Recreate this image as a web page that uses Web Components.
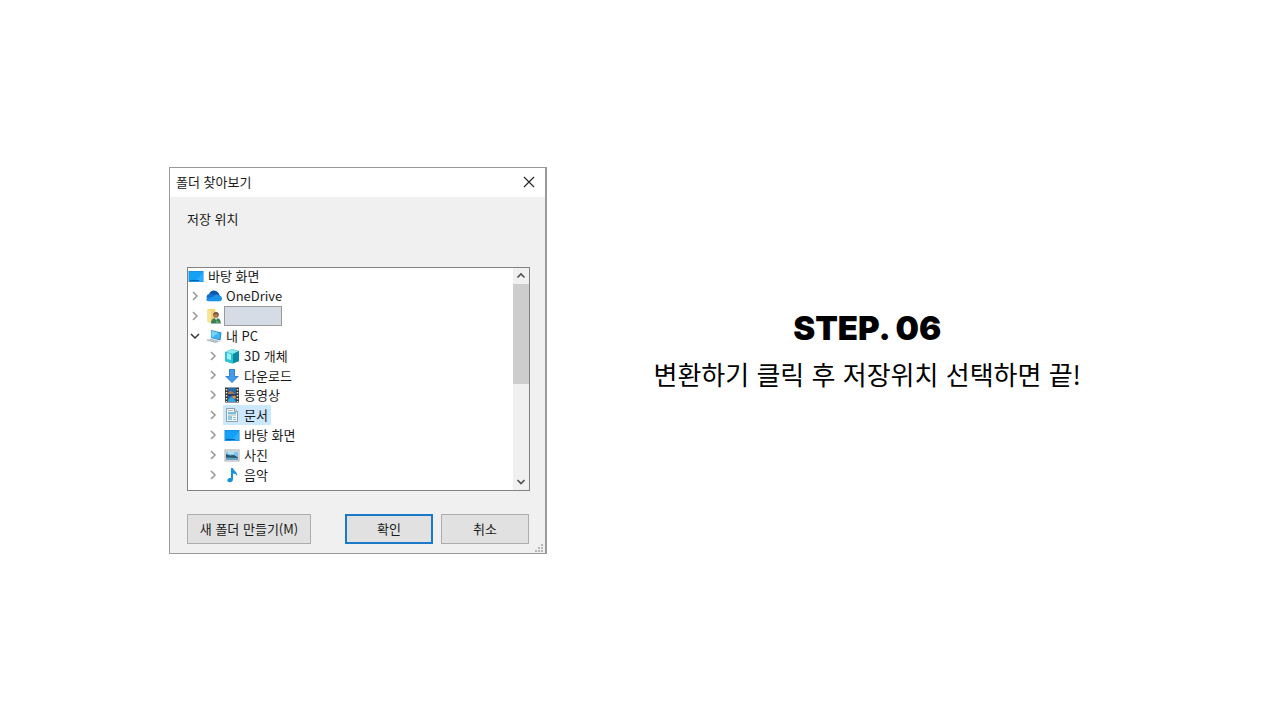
<!DOCTYPE html>
<html lang="ko">
<head>
<meta charset="utf-8">
<meta name="viewport" content="width=device-width, initial-scale=1">
<title>STEP. 06</title>
<style>
body { margin: 0; background: #fff; font-family: "Noto Sans CJK KR", sans-serif; }
</style>
</head>
<body>
<guide-slide>
  <folder-dialog slot="figure" heading="폴더 찾아보기" prompt="저장 위치"></folder-dialog>
  <step-caption slot="caption"><span slot="step">STEP. 06</span>변환하기 클릭 후 저장위치 선택하면 끝!</step-caption>
</guide-slide>
<script>
const define = (name, html, setup) => customElements.define(name, class extends HTMLElement {
  connectedCallback() {
    if (this.shadowRoot) return;
    const root = this.attachShadow({ mode: "open" });
    const template = document.createElement("template");
    template.innerHTML = html;
    root.append(template.content.cloneNode(true));
    if (setup) setup(this, root);
  }
});

const monitor = `<rect x=".5" y="3" width="15" height="11" fill="#1683d0"/><rect x="1" y="3.500" width="14" height="10" fill="#16a0f5"/><path d="M7 13.500 15 5v8.500z" fill="#2caeff"/><path d="M2 12.500h9" stroke="#0865ac"/>`;
const icons = {
  desktop: monitor,
  onedrive: `<path d="M3 6.500a5.200 5.200 0 0 1 9.500-1.500L14 8l-8 4z" fill="#0b55ae"/><path d="M3 6c2-.6 4 .1 5.500 1.500l3 4H2A3 3 0 0 1 3 6z" fill="#0f6fcb"/><path d="M7.500 8.500c1.500-2.300 4.500-2.500 5.700-.7 1.800 0 2.800 1.300 2.800 2.700 0 1.700-1 2.800-2.500 2.800H3C1.500 13.300.3 12.500 0 11z" fill="#1c91e8"/>`,
  user: `<path d="M1.500 1h7l1 1v12.500H3l-1.500-1z" fill="#f2d36f"/><path d="M1.500 1.500l3.500 1v12l-3.500-1.500z" fill="#fbe39a"/><circle cx="10" cy="6.800" r="2.800" fill="#705039"/><circle cx="10" cy="7.800" r="2" fill="#b17b58"/><path d="M5 15.500c0-4 2-5.500 5-5.500s4.800 1.500 4.800 5.500z" fill="#3b7d58"/><path d="M8.500 10l1.500 2 2-2z" fill="#e5efe9"/><path d="M10 12l4 3h-4z" fill="#63a969"/>`,
  pc: `<path d="M5 2l10.500 2.500-1 8L5 10z" fill="#2584be"/><path d="M5.500 3l9 2.200-.9 6.300L5.500 9.500z" fill="#3fb4f0"/><path d="M5.500 3l7 1.700-7 4.800z" fill="#7bd3fa"/><path d="M0 12l4.500-1.500 10 2.500-4 2.200z" fill="#ced5db"/><path d="M1 12.200l9 2.300M4 11.300l8 2.200" stroke="#9aa6af" stroke-width=".7"/>`,
  cube: `<path d="M1 4l7-3 7 2v10l-7 2.500L1 13z" fill="#14a4b9"/><path d="M1 4l7-3 7 2-6 3z" fill="#8ce6ed"/><path d="M9 6l6-3v10l-6 2.500z" fill="#078aa4"/><path d="M1 4l8 2v9.500L1 13z" fill="#29c5d5"/><path d="M3 5l4 1v6l-4-1z" fill="#a2eff4"/>`,
  download: `<path d="M5 1h6v7h4l-7 7-7-7h4z" fill="#2e83d5"/><path d="M6 2h4v7h3l-5 5-5-5h3z" fill="#459bea"/>`,
  video: `<rect x="1" y=".5" width="14" height="15" fill="#333638"/><path d="M4 1h8v14H4z" fill="#2561ae"/><path d="M4 1h8v6H4z" fill="#246ba9"/><path d="M4 5.500l3-2 4 3.500H4z" fill="#a87350"/><path d="M4 13l4-4 4 6H4z" fill="#37a6d8"/><path d="M8 9l3-1 1 3-2 1z" fill="#df8e45"/><path d="M4 8h8" stroke="#22282e" stroke-width="1"/><path d="M2.500 2v13M13.500 2v13" stroke="#e2e3df" stroke-width="1.500" stroke-dasharray="1.500 1.500"/>`,
  document: `<path d="M2.500 1.500h8l3 3v10h-11z" fill="#f3f8fb" stroke="#8f9fab"/><path d="M10.500 1.500v3h3" fill="#dce8ee" stroke="#8f9fab"/><path d="M4 6h8" stroke="#4fabcf" stroke-width="1.500"/><path d="M4 8h8M9 10.500h3M9 12.500h3" stroke="#9fb9c8"/><path d="M4 9h4v4H4z" fill="#8bcbe2"/><path d="M4 3.500h5" stroke="#a9bfcb"/>`,
  photo: `<rect x="1" y="3" width="14" height="11" fill="#f4f5f5" stroke="#aaa" stroke-width="1"/><path d="M2 4.500h12v8H2z" fill="#82c3e9"/><path d="M2 7l4 1.500 4-.5 4 2.500v2H2z" fill="#2d5269"/><path d="M2 10.500l12 .5v1.500H2z" fill="#5fa9c8"/><path d="M4 6h6" stroke="#e9f8ff"/>`,
  music: `<path d="M7 1h2c.3 2.800 4.700 3.500 4.200 8.500-.7-2-2-2.700-4.200-2.900v5.600c0 2-1.700 3.200-3.600 3-2.300-.2-2.700-2.600-1-3.700.8-.5 1.700-.6 2.600-.4z" fill="#1593df"/>`
};

define("guide-slide", `
<style>
:host { display: block; }
main { box-sizing: border-box; min-height: 100vh; padding: 24px 199px 24px 169px; display: flex; align-items: center; justify-content: space-between; gap: 24px; }
</style>
<main><slot name="figure"></slot><slot name="caption"></slot></main>`);

define("step-caption", `
<style>
:host { display: block; text-align: center; color: #000; padding-bottom: 20px; }
h1 { margin: 0 0 4px; font: 900 33px/44px Inter, sans-serif; }
p { margin: 0; font: 400 26px/40px "Noto Sans CJK KR", sans-serif; white-space: nowrap; }
</style>
<h1><slot name="step"></slot></h1><p><slot></slot></p>`);

define("push-button", `
<style>
:host { display: block; width: 88px; }
:host([wide]) { width: 124px; }
button { box-sizing: border-box; width: 100%; height: 30px; padding: 0; border: 1px solid #adadad; border-radius: 0; background: #e1e1e1; color: #1a1a1a; font: inherit; line-height: 24px; white-space: nowrap; }
:host([primary]) button { border: 2px solid #1b7ac8; }
</style>
<button type="button"><slot></slot></button>`);

define("tree-row", `
<style>
:host { display: flex; min-height: 0; align-items: center; gap: 3px; }
:host([level="2"]) { padding-left: 18px; }
:host([level="0"]) .toggle { display: none; }
.toggle { width: 14px; height: 18px; padding: 0; border: 0; background: none; color: #979797; display: grid; place-items: center; }
:host([open]) .toggle { color: #333; }
:host([open]) .toggle svg { transform: rotate(90deg); }
.label { display: flex; align-items: center; height: 20px; gap: 4px; padding: 0 3px 0 1px; }
:host([level="0"]) .label { padding-left: 0; }
:host([selected]) .label { background: #cce8ff; }
svg { display: block; }
.text { line-height: 20px; }
:host([masked]) .label { gap: 2px; }
:host([masked]) .text { box-sizing: border-box; width: 58px; height: 20px; background: #d6dce5; border: 1px solid #9a9a9a; }
</style>
<button class="toggle" type="button" aria-label="펼치기"><svg width="12" height="12" viewBox="0 0 12 12"><path d="M4 2l4 4-4 4" fill="none" stroke="currentColor" stroke-width="1.500"/></svg></button>
<span class="label"><svg class="icon" width="16" height="16" viewBox="0 0 16 16"></svg><span class="text"><slot></slot></span></span>`,
(host, root) => { root.querySelector(".icon").innerHTML = icons[host.getAttribute("icon")]; });

define("scroll-rail", `
<style>
:host { display: flex; flex-direction: column; width: 16px; background: #f0f0f0; }
button { width: 16px; height: 16px; padding: 0; border: 0; background: #f0f0f0; display: grid; place-items: center; }
.track { flex: 1; }
.thumb { height: 100px; background: #cdcdcd; }
path { fill: none; stroke: #505050; stroke-width: 1.600; }
</style>
<button type="button" aria-label="위로"><svg width="10" height="8" viewBox="0 0 10 8"><path d="M1.500 5.500 5 2l3.500 3.500"/></svg></button>
<div class="track"><div class="thumb"></div></div>
<button type="button" aria-label="아래로"><svg width="10" height="8" viewBox="0 0 10 8"><path d="M1.500 2 5 5.500 8.500 2"/></svg></button>`);

define("folder-tree", `
<style>
:host { display: flex; height: 222px; overflow: hidden; background: #fff; border: 1px solid #828282; }
.rows { flex: 1; min-width: 0; display: grid; grid-auto-rows: 1fr; height: 218px; margin-top: -1px; }
</style>
<div class="rows"><slot></slot></div><scroll-rail></scroll-rail>`);

define("folder-dialog", `
<style>
:host { display: block; flex: none; width: 378px; box-sizing: border-box; position: relative; background: #f0f0f0; border: 1px solid #9a9a9a; border-right-width: 2px; color: #1a1a1a; font-size: 13px; line-height: 20px; }
header { display: flex; align-items: center; justify-content: space-between; height: 29px; padding: 0 10px 0 6px; background: #fff; }
h2 { margin: 0; font: inherit; }
.close { width: 12px; height: 12px; padding: 0; border: 0; background: none; }
svg { display: block; }
.body { padding: 12px 15px 9px 17px; }
p { margin: 0 0 38px; }
footer { display: flex; gap: 8px; margin-top: 23px; padding: 0 1px 0 0; }
footer :first-child { margin-right: auto; }
.grip { position: absolute; right: 1px; bottom: 0; fill: #b5b5b5; }
</style>
<header><h2></h2><button class="close" type="button" aria-label="닫기"><svg width="12" height="12" viewBox="0 0 12 12"><path d="M1 1l10 10M11 1L1 11" stroke="#222" stroke-width="1.100"/></svg></button></header>
<div class="body">
  <p></p>
  <folder-tree>
    <tree-row level="0" icon="desktop">바탕 화면</tree-row>
    <tree-row level="1" icon="onedrive">OneDrive</tree-row>
    <tree-row level="1" icon="user" masked></tree-row>
    <tree-row level="1" icon="pc" open>내 PC</tree-row>
    <tree-row level="2" icon="cube">3D 개체</tree-row>
    <tree-row level="2" icon="download">다운로드</tree-row>
    <tree-row level="2" icon="video">동영상</tree-row>
    <tree-row level="2" icon="document" selected>문서</tree-row>
    <tree-row level="2" icon="desktop">바탕 화면</tree-row>
    <tree-row level="2" icon="photo">사진</tree-row>
    <tree-row level="2" icon="music">음악</tree-row>
  </folder-tree>
  <footer><push-button wide>새 폴더 만들기(M)</push-button><push-button primary>확인</push-button><push-button>취소</push-button></footer>
</div>
<svg class="grip" width="10" height="10" viewBox="0 0 10 10"><path d="M7 1h2v2H7zM7 4h2v2H7zM7 7h2v2H7zM4 4h2v2H4zM4 7h2v2H4zM1 7h2v2H1z"/></svg>`,
(host, root) => {
  root.querySelector("h2").textContent = host.getAttribute("heading");
  root.querySelector("p").textContent = host.getAttribute("prompt");
});
</script>
</body>
</html>
